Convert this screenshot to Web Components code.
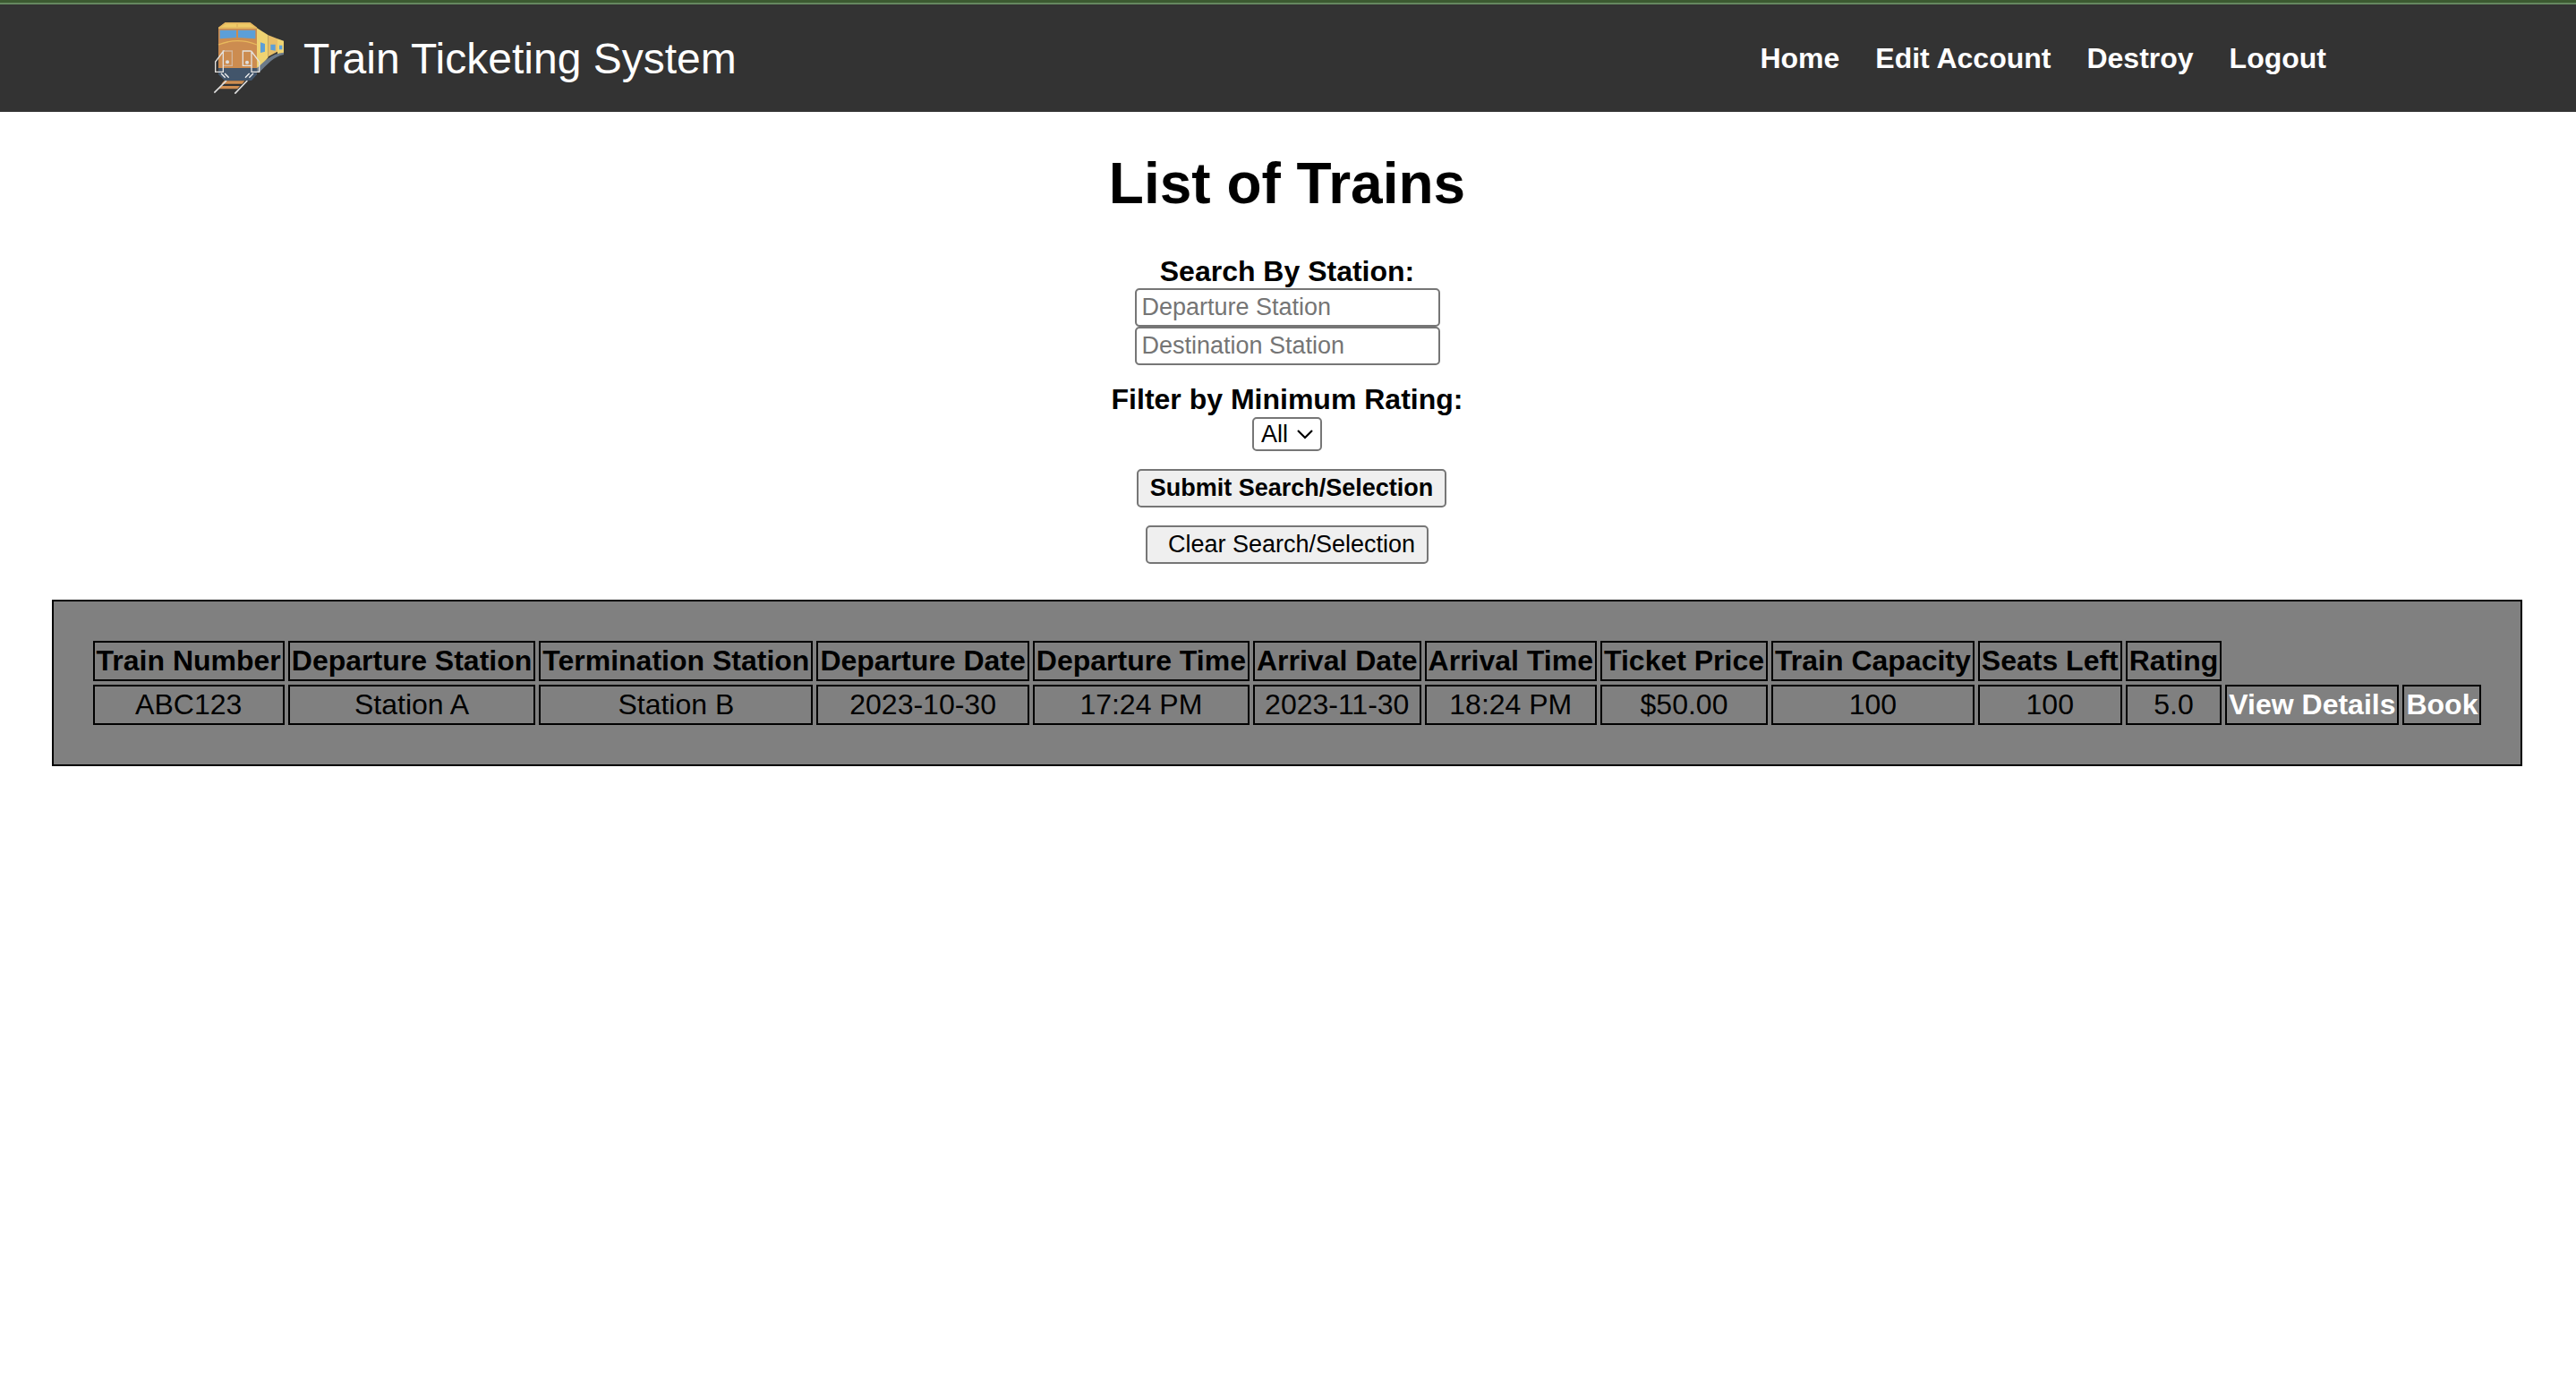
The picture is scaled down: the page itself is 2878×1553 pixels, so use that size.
<!DOCTYPE html>
<html lang="en">
<head>
<meta charset="utf-8">
<title>Train Ticketing System</title>
<style>
  body { margin: 0; background: #fff; color: #000; font: 32px/37px "Liberation Sans", Arial, sans-serif; }
  main { padding-right: 2px; }
  h1 { margin: 43px 0; font-size: 64px; line-height: 74px; text-align: center; }
</style>
</head>
<body>
<site-header>
  <train-logo slot="logo"></train-logo>
  <span slot="brand">Train Ticketing System</span>
  <nav-link href="#home">Home</nav-link>
  <nav-link href="#account">Edit Account</nav-link>
  <nav-link href="#destroy">Destroy</nav-link>
  <nav-link href="#logout">Logout</nav-link>
</site-header>
<main>
  <h1>List of Trains</h1>
  <train-search></train-search>
  <train-table></train-table>
</main>

<template id="site-header">
  <style>
    :host { display: block; background: #333; color: #fff; border-top: 3px solid #3c5a31; }
    header { border-top: 2px solid #65885f; padding: 20px; }
    .inner { max-width: 2400px; margin: 0 auto; display: flex; justify-content: space-between; align-items: center; }
    .brand { display: flex; align-items: center; gap: 20px; font-size: 48px; line-height: 55px; }
    nav { display: flex; }
  </style>
  <header><div class="inner">
    <div class="brand"><slot name="logo"></slot><slot name="brand"></slot></div>
    <nav aria-label="Main"><slot></slot></nav>
  </div></header>
</template>

<template id="nav-link">
  <style>
    :host { display: block; margin-right: 40px; }
    a { color: #fff; font-weight: bold; text-decoration: none; }
  </style>
  <a><slot></slot></a>
</template>

<template id="train-logo">
  <style>
    :host { display: block; width: 80px; height: 80px; }
    svg { display: block; width: 100%; height: 100%; }
  </style>
  <svg viewBox="57 75 240 240" aria-hidden="true">
    <!-- carriages -->
    <path d="M200 93L239 118V192L200 240z" fill="#efd372"/>
    <path d="M239 118L270 130V173L239 190z" fill="#e8bf69"/>
    <path d="M270 130L291 137V178L270 182z" fill="#efd372"/>
    <path d="M201 228C228 205 248 179 291 176V183C258 189 236 216 209 242H201z" fill="#6c7a89"/>
    <path d="M213 142L228 147V173L213 177z" fill="#5c9fd8"/>
    <path d="M247 149H263V170L247 167z" fill="#5c9fd8"/>
    <path d="M276 152H286V166H276z" fill="#5c9fd8"/>
    <!-- track -->
    <path d="M91 271H160L152 281H82z M83 288H144L136 298H73z" fill="#cf8d50"/>
    <path d="M99 270L58 311M169 270L127 314" stroke="#dedede" stroke-width="5" fill="none"/>
    <!-- cab -->
    <path d="M72 92L95 75H178L201 92V229H72z" fill="#cc8c50"/>
    <path d="M72 92L95 75H178L201 92V96H72z" fill="#e5b960"/>
    <path d="M80 90L98 81H132V91zM138 81H176L193 90H138z" fill="#efcb68"/>
    <path d="M77 101H132V126L77 130zM138 101H196V130L138 126z" fill="#5c9fd8"/>
    <path d="M72 150Q136 124 201 150" stroke="#e8b95c" stroke-width="4" fill="none"/>
    <path d="M72 228H201V250L183 270H93L72 250z" fill="#42556b"/>
    <path d="M89 171H118V220H89" stroke="#d3b59b" stroke-width="4" fill="none"/>
    <path d="M89 171L62 207V241H88V171zM182 171H154V220H182M182 171L209 207V241H183V171" stroke="#e4e2df" stroke-width="4" fill="none"/>
    <circle cx="102" cy="208" r="6" fill="#dedede"/><circle cx="168" cy="209" r="6" fill="#dedede"/>
    <path d="M81 246L95 260M93 246L107 260M176 246L162 260M189 246L175 260" stroke="#f0f0f0" stroke-width="4"/>
  </svg>
</template>

<template id="train-search">
  <style>
    :host { display: block; }
    form { display: flex; flex-direction: column; align-items: center; }
    label { font-weight: bold; }
    input, select, button { box-sizing: border-box; margin: 0; font: 27px/31px "Liberation Sans", Arial, sans-serif; color: #000; border: 2px solid #767676; border-radius: 5px; }
    input { width: 341px; height: 43px; padding: 2px 6px; background: #fff; }
    input::placeholder { color: #757575; opacity: 1; }
    .rating-label { margin-top: 20px; }
    .select { display: grid; align-items: center; margin-top: 1px; }
    select { grid-area: 1 / 1; appearance: none; width: 78px; height: 38px; padding: 0 8px; background: #fff; }
    .select svg { grid-area: 1 / 1; justify-self: end; width: 18px; height: 11px; margin-right: 10px; pointer-events: none; }
    button { height: 43px; margin-top: 20px; padding: 0 13px; background: #efefef; }
    .submit { margin-left: 10px; font-weight: bold; }
    .clear { padding-left: 23px; }
  </style>
  <form>
    <label for="departure">Search By Station:</label>
    <input id="departure" type="text" placeholder="Departure Station">
    <input id="destination" type="text" placeholder="Destination Station" aria-label="Destination Station">
    <label class="rating-label" for="rating">Filter by Minimum Rating:</label>
    <div class="select">
      <select id="rating"><option>All</option><option>1</option><option>2</option><option>3</option><option>4</option><option>5</option></select>
      <svg viewBox="0 0 18 11" aria-hidden="true"><path d="M1 1L9 9L17 1" fill="none" stroke="#000" stroke-width="2.2"/></svg>
    </div>
    <button class="submit" type="submit">Submit Search/Selection</button>
    <button class="clear" type="reset">Clear Search/Selection</button>
  </form>
</template>

<template id="train-table">
  <style>
    :host { display: block; margin-top: 40px; }
    table { margin: 0 auto; padding: 40px; border: 2px solid #000; border-spacing: 4px; background: #808080; text-align: center; white-space: nowrap; }
    th, td { border: 2px solid #000; padding: 2px; }
    a { color: #fff; font-weight: bold; text-decoration: none; }
  </style>
  <table>
    <thead><tr></tr></thead>
    <tbody></tbody>
  </table>
</template>

<script>
  class TemplateElement extends HTMLElement {
    constructor() {
      super();
      this.attachShadow({ mode: "open" })
        .append(document.getElementById(this.localName).content.cloneNode(true));
    }
  }

  class NavLink extends TemplateElement {
    connectedCallback() {
      this.shadowRoot.querySelector("a").href = this.getAttribute("href");
    }
  }

  const columns = ["Train Number", "Departure Station", "Termination Station", "Departure Date", "Departure Time",
    "Arrival Date", "Arrival Time", "Ticket Price", "Train Capacity", "Seats Left", "Rating"];
  const trains = [["ABC123", "Station A", "Station B", "2023-10-30", "17:24 PM",
    "2023-11-30", "18:24 PM", "$50.00", "100", "100", "5.0"]];

  class TrainTable extends TemplateElement {
    connectedCallback() {
      const head = this.shadowRoot.querySelector("thead tr");
      head.replaceChildren(...columns.map(name => {
        const th = document.createElement("th");
        th.scope = "col";
        th.textContent = name;
        return th;
      }));
      const body = this.shadowRoot.querySelector("tbody");
      body.replaceChildren();
      for (const train of trains) {
        const row = body.insertRow();
        for (const value of train) row.insertCell().textContent = value;
        for (const [text, action] of [["View Details", "details"], ["Book", "book"]]) {
          const link = document.createElement("a");
          link.href = `#${action}/${train[0]}`;
          link.textContent = text;
          row.insertCell().append(link);
        }
      }
    }
  }

  customElements.define("site-header", class extends TemplateElement {});
  customElements.define("nav-link", NavLink);
  customElements.define("train-logo", class extends TemplateElement {});
  customElements.define("train-search", class extends TemplateElement {});
  customElements.define("train-table", TrainTable);
</script>
</body>
</html>
